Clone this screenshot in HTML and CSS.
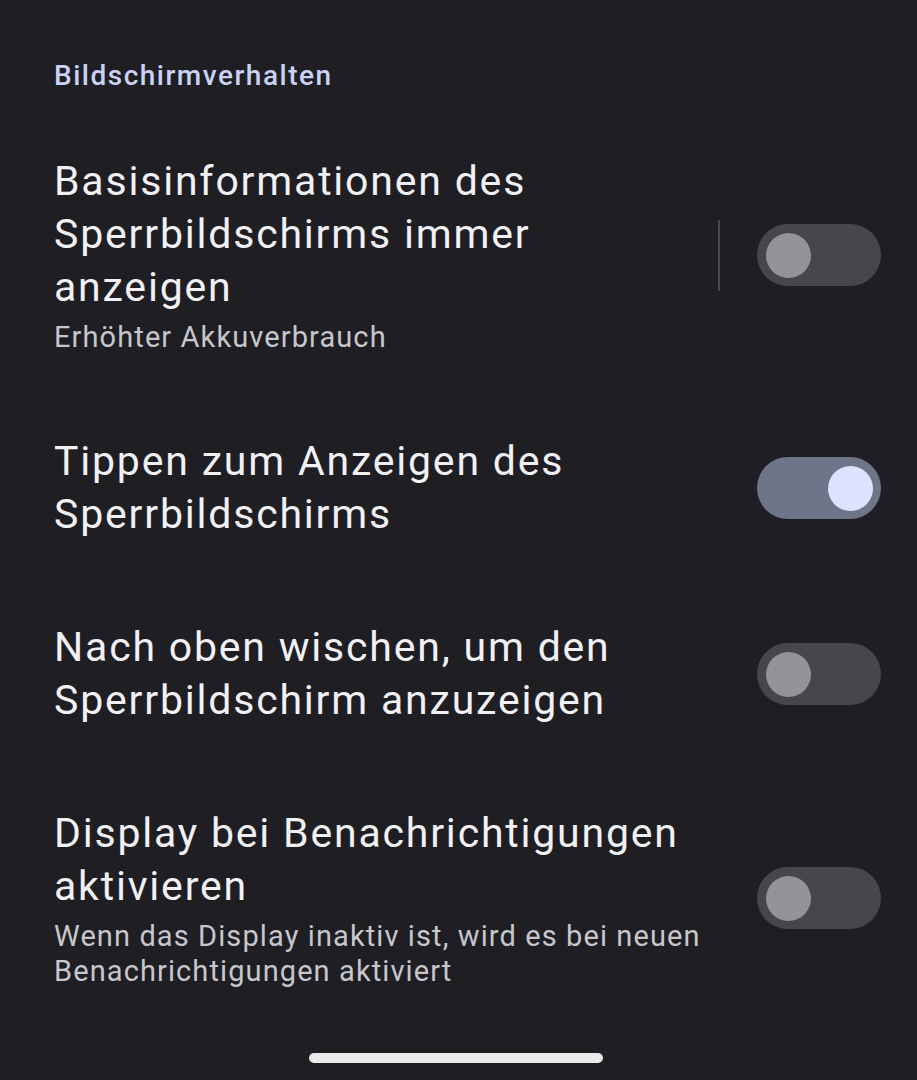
FILE: index.html
```html
<!DOCTYPE html>
<html>
<head>
    <title>Bildschirmverhalten</title>
    <link rel="stylesheet" href="styles.css">
</head>
<body>
    <h2 class="section-title">Bildschirmverhalten</h2>

    <div class="setting">
        <div class="setting-text">
            <div class="setting-title">Basisinformationen des Sperrbildschirms immer anzeigen</div>
            <div class="setting-summary">Erhöhter Akkuverbrauch</div>
        </div>
        <div class="setting-widget with-divider">
            <div class="divider"></div>
            <div class="switch"><div class="thumb"></div></div>
        </div>
    </div>

    <div class="setting">
        <div class="setting-text">
            <div class="setting-title">Tippen zum Anzeigen des Sperrbildschirms</div>
        </div>
        <div class="setting-widget">
            <div class="switch on"><div class="thumb"></div></div>
        </div>
    </div>

    <div class="setting">
        <div class="setting-text">
            <div class="setting-title">Nach oben wischen, um den Sperrbildschirm anzuzeigen</div>
        </div>
        <div class="setting-widget">
            <div class="switch"><div class="thumb"></div></div>
        </div>
    </div>

    <div class="setting">
        <div class="setting-text">
            <div class="setting-title">Display bei Benachrichtigungen aktivieren</div>
            <div class="setting-summary">Wenn das Display inaktiv ist, wird es bei neuen Benachrichtigungen aktiviert</div>
        </div>
        <div class="setting-widget">
            <div class="switch"><div class="thumb"></div></div>
        </div>
    </div>

    <div class="home-bar"></div>
</body>
</html>
```

FILE: styles.css
```css
body {
    margin: 0;
    height: 1080px;
    background: #1f1e23;
    font-family: Roboto, "Noto Sans", sans-serif;
    display: flex;
    flex-direction: column;
    overflow: hidden;
}

.section-title {
    margin: 59px 0 22px 54px;
    font-size: 28px;
    line-height: 34px;
    font-weight: 500;
    letter-spacing: 1.5px;
    color: #c9d2f4;
}

.setting {
    display: flex;
    align-items: center;
    gap: 52px;
    padding: 40px 36px 40px 54px;
}

.setting-text {
    flex: 1;
}

.setting-title {
    font-size: 41px;
    line-height: 53px;
    letter-spacing: 1.8px;
    color: #f1f0f5;
}

.setting-summary {
    margin-top: 6px;
    font-size: 29px;
    line-height: 35px;
    letter-spacing: 1.1px;
    color: #c7c6cd;
}

.setting-widget {
    display: flex;
    align-items: center;
    gap: 37px;
}

.setting-widget.with-divider {
    margin-left: -39px;
}

.divider {
    width: 2px;
    height: 71px;
    background: #4a494f;
}

.switch {
    width: 124px;
    height: 62px;
    border-radius: 31px;
    background: #47464c;
    display: flex;
    align-items: center;
    padding: 0 9px;
    box-sizing: border-box;
}

.thumb {
    width: 45px;
    height: 45px;
    border-radius: 50%;
    background: #949398;
}

.switch.on {
    background: #6f7588;
    justify-content: flex-end;
    padding: 0 8px;
}

.switch.on .thumb {
    background: #dbe3ff;
}

.home-bar {
    margin: auto 0 17px 309px;
    width: 294px;
    height: 10px;
    border-radius: 5px;
    background: #ebebec;
}
```
